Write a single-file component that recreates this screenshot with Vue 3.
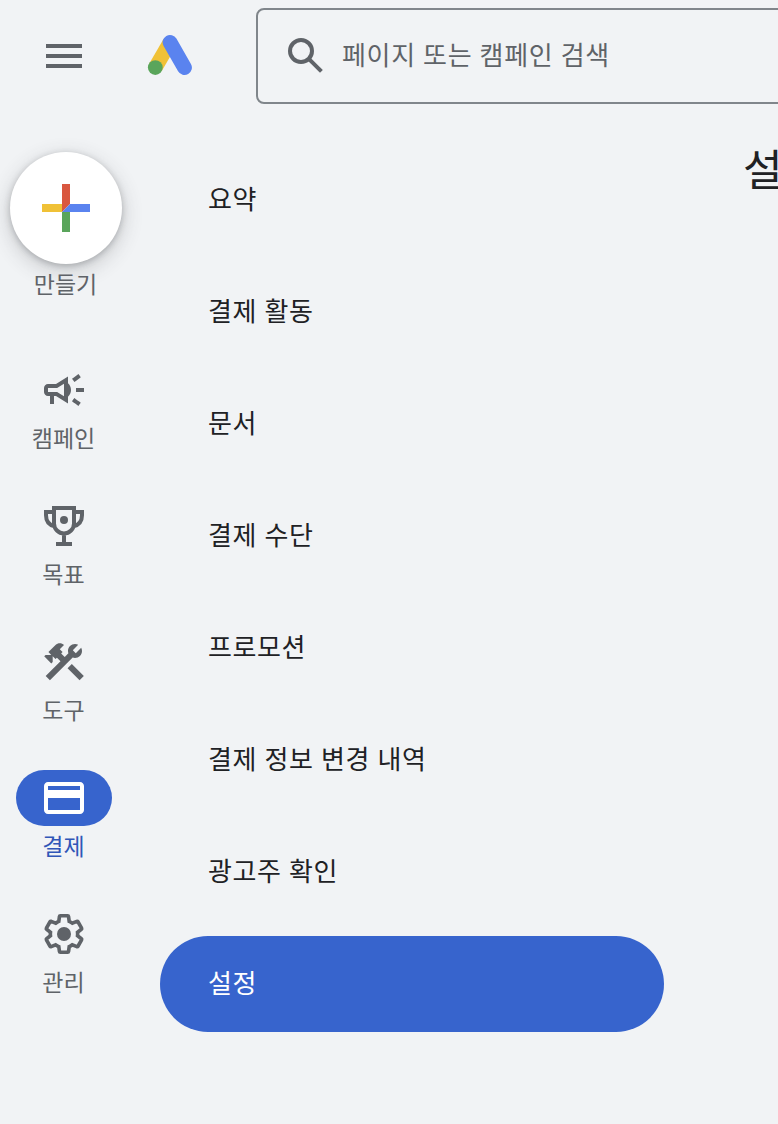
<template>
  <div class="app-shell">
    <header class="top-bar">
      <button class="icon-button" type="button" aria-label="메뉴">
        <svg viewBox="0 0 24 24" class="icon"><path d="M3 18h18v-2H3v2zm0-5h18v-2H3v2zm0-7v2h18V6H3z" /></svg>
      </button>
      <svg class="logo" viewBox="0 0 48 48">
        <path d="M9.3 35.6L24 10.3" stroke="#f0c136" stroke-width="14.6" />
        <path d="M24 10.3l14.5 25.3" stroke="#5a83ef" stroke-width="14.8" stroke-linecap="round" />
        <circle cx="9.3" cy="35.6" r="7.4" fill="#5aa55b" />
      </svg>
      <div class="search-box">
        <svg viewBox="0 0 24 24" class="icon">
          <circle class="line" cx="9.5" cy="9.5" r="5.5" />
          <path class="line" d="M13.4 13.4l6.3 6.3" />
        </svg>
        <span class="search-text">페이지 또는 캠페인 검색</span>
      </div>
    </header>

    <div class="body">
      <nav class="rail">
        <button class="create" type="button">
          <span class="fab">
            <svg viewBox="0 0 48 48" class="icon">
              <path fill="#d9573f" d="M20 0h8v20l-8 8z" />
              <path fill="#5a83ef" d="M28 20h20v8H20z" />
              <path fill="#5aa55b" d="M20 28h8v20h-8z" />
              <path fill="#f0c136" d="M0 20h20v8H0z" />
            </svg>
          </span>
          <span class="create-label">만들기</span>
        </button>

        <a
          v-for="item in railItems"
          :key="item.id"
          href="#"
          class="rail-item"
          :class="{ active: item.id === activeRail }"
          @click.prevent="activeRail = item.id"
        >
          <span class="rail-icon">
            <svg v-if="item.id === 'campaign'" viewBox="0 0 24 24" class="icon">
              <path d="M18 11v2h4v-2h-4zm-2 6.61c.96.71 2.21 1.65 3.2 2.39.4-.53.8-1.07 1.2-1.6-.99-.74-2.24-1.68-3.2-2.4-.4.54-.8 1.08-1.2 1.61zM20.4 5.6c-.4-.53-.8-1.07-1.2-1.6-.99.74-2.24 1.68-3.2 2.4.4.53.8 1.07 1.2 1.6.96-.72 2.21-1.65 3.2-2.4zM4 9c-1.1 0-2 .9-2 2v2c0 1.1.9 2 2 2h1v4h2v-4h1l6 3.7V5.3L8 9H4zm4.55 2L12 8.9v6.2L8.55 13H4v-2h4.55zM15.5 12c0-1.33-.58-2.53-1.5-3.35v6.69c.92-.81 1.5-2.01 1.5-3.34z" />
            </svg>
            <svg v-else-if="item.id === 'goals'" viewBox="0 0 24 24" class="icon">
              <path class="line" d="M7 3h10v7.7a5 5 0 0 1-10 0zM7 5H3v1.6c0 2.9 1.7 4.9 4.3 5.6M17 5h4v1.6c0 2.9-1.7 4.9-4.3 5.6M12 15.5V21M8 21h8" />
              <circle cx="12" cy="9" r="2" />
            </svg>
            <svg v-else-if="item.id === 'tools'" viewBox="0 0 24 24" class="icon">
              <path d="M13.783 15.172l2.121-2.121 5.996 5.996-2.121 2.121z" />
              <path d="M17.5 10c1.93 0 3.5-1.57 3.5-3.5 0-.58-.16-1.12-.41-1.6l-2.7 2.7-1.49-1.49 2.7-2.7c-.48-.25-1.02-.41-1.6-.41C15.57 3 14 4.57 14 6.5c0 .41.08.8.21 1.16l-1.85 1.85-1.78-1.78.71-.71-1.41-1.41L12 3.49c-1.17-1.17-3.07-1.17-4.24 0L4.22 7.03l1.41 1.41H2.81l-.71.71 3.54 3.54.71-.71V9.15l1.41 1.41.71-.71 1.78 1.78-7.41 7.41 2.12 2.12L16.34 9.79c.36.13.75.21 1.16.21z" />
            </svg>
            <svg v-else-if="item.id === 'billing'" viewBox="0 0 24 24" class="icon">
              <path d="M20 4H4c-1.11 0-1.99.89-1.99 2L2 18c0 1.11.89 2 2 2h16c1.11 0 2-.89 2-2V6c0-1.11-.89-2-2-2zm0 14H4v-6h16v6zm0-10H4V6h16v2z" />
            </svg>
            <svg v-else viewBox="0 0 24 24" class="icon">
              <path
                class="line"
                transform="translate(1.08 1.08) scale(.91)"
                d="M19.43 12.98c.04-.32.07-.64.07-.98 0-.34-.03-.66-.07-.98l2.11-1.65c.19-.15.24-.42.12-.64l-2-3.46c-.09-.16-.26-.25-.44-.25-.06 0-.12.01-.17.03l-2.49 1c-.52-.4-1.08-.73-1.69-.98l-.38-2.65C14.46 2.18 14.25 2 14 2h-4c-.25 0-.46.18-.49.42l-.38 2.65c-.61.25-1.17.59-1.69.98l-2.49-1c-.06-.02-.12-.03-.18-.03-.17 0-.34.09-.43.25l-2 3.46c-.13.22-.07.49.12.64l2.11 1.65c-.04.32-.07.65-.07.98 0 .33.03.66.07.98l-2.11 1.65c-.19.15-.24.42-.12.64l2 3.46c.09.16.26.25.44.25.06 0 .12-.01.17-.03l2.49-1c.52.4 1.08.73 1.69.98l.38 2.65c.03.24.24.42.49.42h4c.25 0 .46-.18.49-.42l.38-2.65c.61-.25 1.17-.59 1.69-.98l2.49 1c.06.02.12.03.18.03.17 0 .34-.09.43-.25l2-3.46c.12-.22.07-.49-.12-.64l-2.11-1.65z"
              />
              <circle cx="12" cy="12" r="3.5" />
            </svg>
          </span>
          <span class="rail-label">{{ item.label }}</span>
        </a>
      </nav>

      <nav class="menu">
        <a
          v-for="label in menuItems"
          :key="label"
          href="#"
          class="menu-item"
          :class="{ active: label === activeMenu }"
          @click.prevent="activeMenu = label"
        >{{ label }}</a>
      </nav>

      <main class="content">
        <h1 class="title">{{ activeMenu }}</h1>
      </main>
    </div>
  </div>
</template>

<script setup>
import { ref } from 'vue';

const activeRail = ref('billing');
const activeMenu = ref('설정');

const railItems = [
  { id: 'campaign', label: '캠페인' },
  { id: 'goals', label: '목표' },
  { id: 'tools', label: '도구' },
  { id: 'billing', label: '결제' },
  { id: 'admin', label: '관리' }
];

const menuItems = [
  '요약',
  '결제 활동',
  '문서',
  '결제 수단',
  '프로모션',
  '결제 정보 변경 내역',
  '광고주 확인',
  '설정'
];
</script>

<style>
body {
  margin: 0;
  background: #f1f3f5;
}
</style>

<style scoped>
.app-shell {
  width: 100%;
  height: 1124px;
  overflow: hidden;
  background: #f1f3f5;
  color: #202124;
  font-family: "Noto Sans CJK KR", sans-serif;
}

button {
  padding: 0;
  border: 0;
  background: none;
  color: inherit;
  font: inherit;
}

a {
  color: inherit;
  text-decoration: none;
}

.icon {
  display: block;
  width: 48px;
  height: 48px;
  flex: none;
  fill: currentColor;
}

.line {
  fill: none;
  stroke: currentColor;
  stroke-width: 2;
}

.top-bar {
  display: flex;
  align-items: center;
  height: 112px;
  padding-left: 40px;
  color: #5f6368;
}

.logo {
  width: 48px;
  height: 48px;
  margin: 0 62px 0 58px;
  flex: none;
  fill: none;
}

.search-box {
  display: flex;
  align-items: center;
  flex: none;
  box-sizing: border-box;
  width: 720px;
  height: 96px;
  padding-left: 24px;
  border: 2px solid #80868b;
  border-radius: 8px;
}

.search-text {
  margin-left: 12px;
  padding-bottom: 4px;
  font-size: 26px;
  letter-spacing: 0.7px;
  word-spacing: 0.7px;
  line-height: 40px;
}

.body {
  display: flex;
}

.rail {
  flex: none;
  width: 160px;
  padding-top: 40px;
  color: #5f6368;
}

.create {
  display: flex;
  flex-direction: column;
  align-items: center;
  width: 112px;
  height: 210px;
  margin-left: 10px;
}

.fab {
  display: flex;
  align-items: center;
  justify-content: center;
  width: 112px;
  height: 112px;
  border-radius: 50%;
  background: #fff;
  box-shadow: 0 2px 6px rgba(60, 64, 67, 0.3), 0 6px 18px 4px rgba(60, 64, 67, 0.16);
}

.create-label,
.rail-label {
  padding-right: 1px;
  font-size: 23px;
  line-height: 39px;
}

.rail-item {
  display: flex;
  flex-direction: column;
  align-items: center;
  width: 96px;
  height: 136px;
  margin-left: 16px;
}

.rail-icon {
  display: flex;
  align-items: center;
  justify-content: center;
  width: 96px;
  height: 56px;
  border-radius: 28px;
}

.rail-item.active {
  color: #3056b8;
}

.rail-item.active .rail-icon {
  background: #3764cd;
  color: #fff;
}

.menu {
  display: flex;
  flex-direction: column;
  gap: 16px;
  flex: none;
  width: 504px;
  padding-top: 40px;
}

.menu-item {
  box-sizing: border-box;
  height: 96px;
  padding-left: 48px;
  border-radius: 48px;
  font-size: 26px;
  letter-spacing: 0.6px;
  word-spacing: 1px;
  line-height: 92px;
}

.menu-item.active {
  background: #3764cd;
  color: #fff;
}

.content {
  flex: none;
  padding: 24px 0 0 79px;
}

.title {
  margin: 0;
  font-size: 43px;
  font-weight: 400;
  line-height: 62px;
  white-space: nowrap;
}
</style>
